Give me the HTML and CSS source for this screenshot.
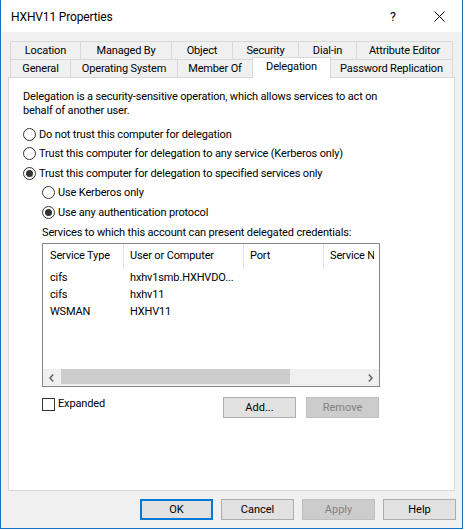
FILE: index.html
```html
<!DOCTYPE html>
<html>
<head>
<meta charset="utf-8">
<title>HXHV11 Properties</title>
<link rel="stylesheet" href="styles.css">
</head>
<body>
<div class="window">
  <div class="titlebar">
    <span class="title">HXHV11 Properties</span>
    <span class="cap-btn help-btn">?</span>
    <span class="cap-btn close-btn"><svg width="11" height="11" viewBox="0 0 11 11"><path d="M0.5 0.5L10.5 10.5M10.5 0.5L0.5 10.5" stroke="#000" stroke-width="1" fill="none"/></svg></span>
  </div>
  <div class="tabs">
    <div class="tabrow">
      <div class="tab t-loc">Location</div>
      <div class="tab t-mgd">Managed By</div>
      <div class="tab t-obj">Object</div>
      <div class="tab t-sec">Security</div>
      <div class="tab t-dial">Dial-in</div>
      <div class="tab t-attr">Attribute Editor</div>
    </div>
    <div class="tabrow">
      <div class="tab t-gen">General</div>
      <div class="tab t-os">Operating System</div>
      <div class="tab t-mem">Member Of</div>
      <div class="tab t-del selected">Delegation</div>
      <div class="tab t-pwd">Password Replication</div>
    </div>
  </div>
  <div class="panel">
    <p class="intro">Delegation is a security-sensitive operation, which allows services to act on<br>behalf of another user.</p>
    <div class="opt first h20"><span class="radio"></span><span>Do not trust this computer for delegation</span></div>
    <div class="opt h19"><span class="radio"></span><span>Trust this computer for delegation to any service (Kerberos only)</span></div>
    <div class="opt h20"><span class="radio checked"></span><span>Trust this computer for delegation to specified services only</span></div>
    <div class="opt sub h19"><span class="radio"></span><span>Use Kerberos only</span></div>
    <div class="opt sub h20"><span class="radio checked"></span><span>Use any authentication protocol</span></div>
    <div class="services-label">Services to which this account can present delegated credentials:</div>
    <div class="listbox">
      <div class="lv-header">
        <div class="cell c1">Service Type</div>
        <div class="cell c2">User or Computer</div>
        <div class="cell c3">Port</div>
        <div class="cell c4">Service Name</div>
      </div>
      <div class="lv-row"><div class="cell c1">cifs</div><div class="cell c2">hxhv1smb.HXHVDO...</div></div>
      <div class="lv-row"><div class="cell c1">cifs</div><div class="cell c2">hxhv11</div></div>
      <div class="lv-row"><div class="cell c1">WSMAN</div><div class="cell c2">HXHV11</div></div>
      <div class="hscroll">
        <div class="sb-btn"><svg width="5" height="8" viewBox="0 0 5 8"><path d="M4.2 0.6L1 4L4.2 7.4" stroke="#606060" stroke-width="1.5" fill="none"/></svg></div>
        <div class="sb-thumb"></div>
        <div class="sb-track"></div>
        <div class="sb-btn"><svg width="5" height="8" viewBox="0 0 5 8"><path d="M0.8 0.6L4 4L0.8 7.4" stroke="#606060" stroke-width="1.5" fill="none"/></svg></div>
      </div>
    </div>
    <div class="list-actions">
      <span class="checkbox"></span><span class="cb-label">Expanded</span>
      <span class="spacer"></span>
      <button class="btn">Add...</button>
      <button class="btn disabled">Remove</button>
    </div>
  </div>
  <div class="footer">
    <button class="btn default">OK</button>
    <button class="btn">Cancel</button>
    <button class="btn disabled">Apply</button>
    <button class="btn">Help</button>
  </div>
</div>
</body>
</html>
```

FILE: styles.css
```css
* { box-sizing: border-box; }
html, body { margin: 0; padding: 0; background: #fff; }
body {
  font-family: Roboto, "Liberation Sans", sans-serif;
  font-size: 11px;
  letter-spacing: -0.15px;
  color: #000;
}
.window {
  width: 463px;
  height: 529px;
  border: 1px solid #1b6fbf;
  border-top: none;
  background: #f0f0f0;
  display: flex;
  flex-direction: column;
}
.titlebar {
  height: 32px;
  flex: none;
  background: #fff;
  display: flex;
  align-items: center;
  padding-left: 10px;
  padding-top: 1px;
  font-size: 12px;
}
.title { flex: 1; }
.cap-btn {
  width: 46px;
  height: 31px;
  display: flex;
  align-items: center;
  justify-content: center;
}
.help-btn { font-size: 12.5px; }
.tabs { margin: 9px 0 0 9px; flex: none; }
.tabrow { display: flex; align-items: flex-start; }
.tab {
  height: 18px;
  border: 1px solid #d9d9d9;
  border-bottom: none;
  background: #f0f0f0;
  display: flex;
  align-items: center;
  justify-content: center;
  white-space: nowrap;
  margin-left: -1px;
  padding-bottom: 1px;
}
.tab:first-child { margin-left: 0; }
.t-loc { width: 71px; }
.t-mgd { width: 92px; }
.t-obj { width: 62px; }
.t-sec { width: 67px; }
.t-dial { width: 59px; }
.t-attr { width: 97px; }
.t-gen { width: 61px; }
.t-os { width: 108px; }
.t-mem { width: 76px; }
.t-del { width: 79px; }
.t-pwd { width: 123px; }
.tab.selected {
  position: relative;
  z-index: 1;
  background: #fff;
  height: 21px;
  margin-top: -2px;
  margin-bottom: -1px;
  padding-bottom: 4px;
}
.panel {
  flex: none;
  margin-left: 7px;
  width: 447px;
  height: 414px;
  border: 1px solid #d9d9d9;
  background: #fff;
  padding: 12px 0 0 14px;
}
.intro { margin: 0; line-height: 14px; }
.opt { display: flex; align-items: center; gap: 3px; white-space: nowrap; }
.opt.first { margin-top: 6px; }
.h20 { height: 20px; }
.h19 { height: 19px; }
.opt.sub { padding-left: 19px; }
.radio {
  width: 13px;
  height: 13px;
  border: 1px solid #333;
  border-radius: 50%;
  background: #fff;
  display: flex;
  align-items: center;
  justify-content: center;
  flex: none;
}
.radio.checked::after {
  content: "";
  width: 7px;
  height: 7px;
  border-radius: 50%;
  background: #333;
}
.services-label { margin: 4px 0 0 19px; line-height: 14px; }
.listbox {
  margin: 3px 0 0 19px;
  width: 338px;
  height: 144px;
  border: 1px solid #828790;
  background: #fff;
  display: flex;
  flex-direction: column;
  overflow: hidden;
}
.lv-header { display: flex; height: 25px; flex: none; }
.lv-header .cell { border-right: 1px solid #e5e5e5; height: 25px; line-height: 24px; }
.lv-header .c4 { border-right: none; }
.cell { white-space: nowrap; overflow: hidden; flex: none; }
.c1 { width: 81px; padding-left: 7px; }
.c2 { width: 120px; padding-left: 6px; }
.c3 { width: 80px; padding-left: 6px; }
.c4 { width: 50px; padding-left: 6px; }
.lv-row { display: flex; height: 17px; line-height: 17px; flex: none; }
.hscroll {
  margin-top: auto;
  height: 17px;
  display: flex;
  background: #f0f0f0;
  flex: none;
}
.sb-btn {
  width: 17px;
  height: 17px;
  display: flex;
  align-items: center;
  justify-content: center;
  flex: none;
}
.sb-thumb {
  width: 229px;
  height: 15px;
  margin: 0 0 1px 1px;
  background: #cdcdcd;
  flex: none;
}
.sb-track { flex: 1; }
.list-actions {
  margin: 10px 0 0 19px;
  width: 337px;
  display: flex;
  align-items: flex-start;
}
.checkbox {
  width: 13px;
  height: 13px;
  border: 1px solid #333;
  background: #fff;
  margin-top: 1px;
  flex: none;
}
.cb-label { margin-left: 3px; line-height: 14px; }
.spacer { flex: 1; }
.btn {
  width: 73px;
  height: 21px;
  border: 1px solid #adadad;
  background: #e1e1e1;
  font: inherit;
  color: #000;
  padding: 0;
  margin: 0;
  flex: none;
}
.list-actions .btn + .btn { margin-left: 10px; }
.btn.disabled { background: #cccccc; border-color: #bfbfbf; color: #838383; }
.btn.default { border: 2px solid #0078d7; }
.footer {
  margin-top: 8px;
  display: flex;
  justify-content: flex-end;
  gap: 8px;
  padding-right: 6px;
  flex: none;
}
```
